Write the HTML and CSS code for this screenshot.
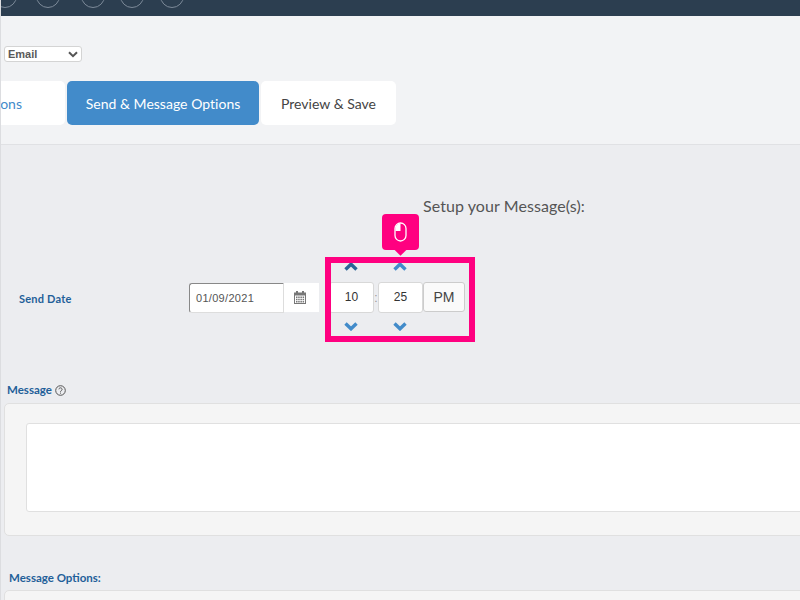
FILE: index.html
```html
<!DOCTYPE html>
<html lang="en">
<head>
<meta charset="utf-8">
<title>Setup your Message(s)</title>
<link rel="stylesheet" href="styles.css">
</head>
<body>
<div class="page">
  <header class="topbar">
    <span class="dot d1"></span><span class="dot d2"></span><span class="dot d3"></span><span class="dot d4"></span><span class="dot d5"></span>
  </header>
  <section class="top">
    <div class="select-row">
      <div class="fake-select"><span>Email</span>
        <svg class="sel-arrow" width="10" height="7" viewBox="0 0 10 7"><path d="M1 1.2l4 4 4-4" fill="none" stroke="#555" stroke-width="2"/></svg>
      </div>
    </div>
    <nav class="tabs">
      <div class="tab tab-first">Options</div>
      <div class="tab tab-active">Send &amp; Message Options</div>
      <div class="tab tab-last">Preview &amp; Save</div>
    </nav>
  </section>
  <main class="panel">
    <h2 class="title">Setup your Message(s):</h2>
    <div class="date-row">
      <label class="date-label">Send Date</label>
      <div class="date-input">01/09/2021</div>
      <div class="cal-addon">
        <svg width="12" height="13" viewBox="0 0 12 13"><path fill="#777" d="M2 0h2v1.500h4V0h2v1.500h2V13H0V1.500h2zM1 4.500V12h10V4.500z"/><path fill="#777" d="M2 5.500h1.500V7H2zM4.200 5.500h1.500V7H4.200zM6.400 5.500h1.500V7H6.400zM8.600 5.500h1.500V7H8.600zM2 7.700h1.500v1.500H2zM4.200 7.700h1.500v1.500H4.200zM6.400 7.700h1.500v1.500H6.400zM8.600 7.700h1.500v1.500H8.600zM2 9.900h1.500v1.500H2zM4.200 9.900h1.500v1.500H4.200zM6.400 9.900h1.500v1.500H6.400zM8.600 9.900h1.500v1.500H8.600z"/></svg>
      </div>
      <div class="time">
        <svg class="chev chev-up" width="14" height="9" viewBox="0 0 14 9"><path d="M1.500 7.500L7 2.200l5.500 5.300" fill="none" stroke="#2a6496" stroke-width="3.400"/></svg>
        <span></span>
        <svg class="chev chev-up" width="14" height="9" viewBox="0 0 14 9"><path d="M1.500 7.500L7 2.200l5.500 5.300" fill="none" stroke="#428bca" stroke-width="3.400"/></svg>
        <span></span>
        <div class="time-input">10</div>
        <span class="colon">:</span>
        <div class="time-input">25</div>
        <div class="ampm">PM</div>
        <svg class="chev" width="14" height="9" viewBox="0 0 14 9"><path d="M1.500 1.500L7 6.800l5.500-5.300" fill="none" stroke="#428bca" stroke-width="3.400"/></svg>
        <span></span>
        <svg class="chev" width="14" height="9" viewBox="0 0 14 9"><path d="M1.500 1.500L7 6.800l5.500-5.300" fill="none" stroke="#428bca" stroke-width="3.400"/></svg>
        <span></span>
      </div>
      <div class="highlight"></div>
      <div class="tip">
        <svg width="13" height="20" viewBox="0 0 13 20"><rect x="1" y="1" width="11" height="18" rx="5.500" fill="none" stroke="#fff" stroke-width="1.300"/><path d="M6.500 1.500A5 5 0 0 0 1.500 6.500V9h5z" fill="#fff"/></svg>
      </div>
    </div>
    <div class="msg-label">Message
      <svg class="help" width="11" height="11" viewBox="0 0 11 11"><circle cx="5.500" cy="5.500" r="4.800" fill="none" stroke="#555" stroke-width="1"/><path d="M3.900 4.300a1.600 1.500 0 1 1 2.500 1.300c-.6.400-.9.600-.9 1.200" fill="none" stroke="#555" stroke-width="1"/><rect x="5" y="7.600" width="1" height="1" fill="#555"/></svg>
    </div>
    <div class="well">
      <div class="textarea"></div>
    </div>
    <div class="opt-label">Message Options:</div>
    <div class="well well-opt"></div>
  </main>
</div>
</body>
</html>
```
FILE: styles.css
```css
* { box-sizing: border-box; }
html, body { margin: 0; padding: 0; height: 100%; overflow: hidden; }
body { background: #f2f3f5; font-family: "Liberation Sans", Arial, sans-serif; }

.page { width: 800px; height: 600px; overflow: hidden; border-left: 1px solid #dcdde0; display: flex; flex-direction: column; }

.topbar { height: 16px; flex: none; background: #2c3e50; display: flex; align-items: flex-end; overflow: hidden; }
.dot { flex: none; width: 24px; height: 24px; border-radius: 50%; border: 1px solid #7d8a99; margin-bottom: 8px; }
.d1 { margin-left: -8px; }
.d2 { margin-left: 19px; }
.d3 { margin-left: 21px; }
.d4 { margin-left: 15px; }
.d5 { margin-left: 16px; }

.top { flex: none; height: 129px; border-bottom: 1px solid #e0e1e4; padding-top: 30px; }
.select-row { height: 35px; padding-left: 3px; }
.fake-select { width: 78px; height: 16px; background: #fff; border: 1px solid #d4d4d4; border-radius: 3px; display: flex; align-items: center; justify-content: space-between; padding: 0 3px; font-size: 11px; font-weight: 700; color: #5a5a5a; }
.tabs { display: flex; gap: 2px; }
.tab { height: 44px; display: flex; align-items: center; justify-content: center; background: #fff; border-radius: 5px; font-family: Lato, sans-serif; font-size: 14px; letter-spacing: .02px; color: #444; }
.tab-first { width: 120px; margin-left: -56px; color: #428bca; justify-content: flex-end; padding-right: 43px; }
.tab-active { width: 192px; background: #428bca; color: #fff; }
.tab-last { width: 135px; }

.panel { flex: 1; background: #ecedf0; padding-top: 51px; min-height: 0; }
.title { margin: 0 0 0 422px; height: 20px; line-height: 20px; font-family: Lato, sans-serif; font-size: 16px; font-weight: 400; letter-spacing: .07px; color: #555; white-space: nowrap; }

.date-row { position: relative; display: flex; align-items: flex-start; height: 136px; margin-top: 46px; padding-top: 21px; }
.date-label { width: 188px; padding: 9px 0 0 18px; font-family: Lato, sans-serif; font-size: 11px; font-weight: 700; letter-spacing: .2px; color: #1f6099; }
.date-input { width: 95px; height: 30px; line-height: 28px; background: #fff; border: 1px solid #ddd; border-top-color: #888; border-left-color: #888; border-radius: 3px 0 0 3px; padding-left: 6px; font-size: 11px; letter-spacing: .3px; color: #555; }
.cal-addon { width: 35px; height: 29px; background: #fff; display: flex; align-items: center; justify-content: center; padding: 0 4px 1px 0; }

.time { display: grid; grid-template-columns: 45px 4px 45px 42px; grid-template-rows: 20px 31px 26px; align-items: center; justify-items: center; margin: -21px 0 0 10px; }
.chev { display: block; margin-right: 1px; }
.chev-up { align-self: start; }
.time-input { width: 45px; height: 31px; line-height: 29px; text-align: center; background: #fff; border: 1px solid #d8d8d8; border-radius: 3px; font-size: 12px; color: #333; }
.colon { font-size: 12px; color: #999; }
.ampm { align-self: start; width: 42px; height: 30px; line-height: 28px; text-align: center; background: #fafafa; border: 1px solid #ccc; border-radius: 3px; font-size: 14px; color: #444; }

.highlight { position: absolute; left: 324px; top: -5px; width: 150px; height: 85px; border: 6px solid #ff0080; pointer-events: none; }
.tip { position: absolute; left: 381px; top: -48px; width: 37px; height: 36px; background: #ff0080; border-radius: 4px; display: flex; align-items: center; justify-content: center; }
.tip::after { content: ""; position: absolute; left: 14px; bottom: -4px; width: 9px; height: 9px; background: #ff0080; transform: rotate(45deg); }

.msg-label { height: 21px; margin-top: -16px; padding-left: 6px; font-family: Lato, sans-serif; font-size: 11.500px; font-weight: 700; color: #1f6099; line-height: 16px; display: flex; align-items: flex-start; gap: 3px; }
.help { margin-top: 3px; }
.well { margin-left: 3px; width: 840px; height: 133px; background: #f5f5f5; border: 1px solid #e0e0e0; border-radius: 5px; padding: 19px 0 0 21px; }
.textarea { height: 89px; background: #fff; border: 1px solid #e0e0e0; border-radius: 3px; }
.opt-label { height: 54px; padding: 34px 0 0 8px; font-family: Lato, sans-serif; font-size: 11.500px; font-weight: 700; color: #1f6099; line-height: 16px; }
.well-opt { height: 40px; }
```
